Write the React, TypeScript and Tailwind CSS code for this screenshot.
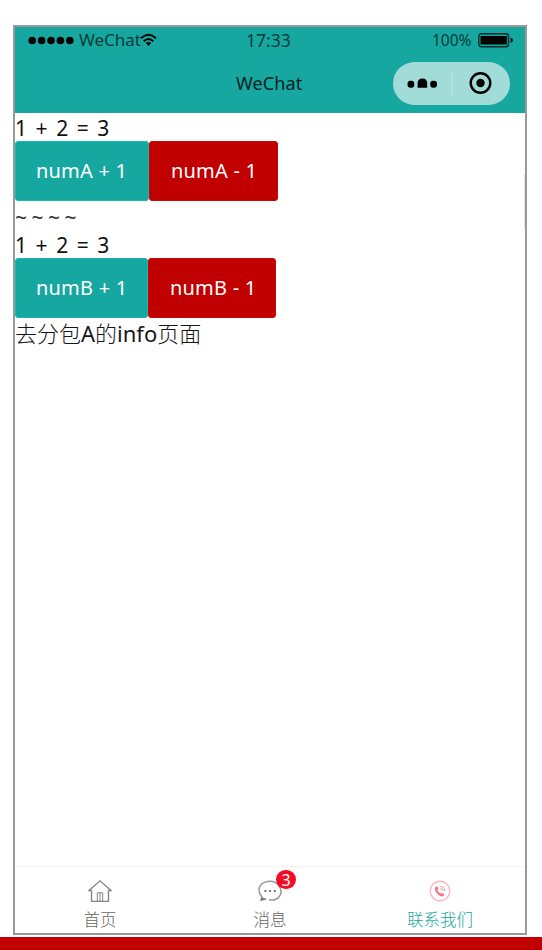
import React from 'react';

const FONT = "font-['Noto_Sans','Noto_Sans_CJK_SC',sans-serif]";

function StatusBar() {
  return (
    <div className="flex h-[26px] items-center text-black">
      <svg className="ml-[13px] block h-[9px] w-[48px] shrink-0" viewBox="0 0 48 9">
        {[4.2, 13.6, 23, 32.4, 41.8].map((x) => (
          <circle key={x} cx={x} cy="4.5" r="3.8" fill="#000" />
        ))}
      </svg>
      <span className="ml-[3px] w-[62px] text-[17px] leading-[26px] text-[#063b38]">WeChat</span>
      <svg className="-ml-px block h-[14px] w-[17px] shrink-0" viewBox="0 0 17 14" fill="none" stroke="#000" strokeWidth="2">
        <path d="M1 5.2Q8.5-1.6 16 5.2" />
        <path d="M3.7 8.2Q8.5 3.8 13.3 8.2" />
        <path d="M5.8 10Q8.5 8 11.2 10L8.5 13Z" fill="#000" stroke="none" />
      </svg>
      <span className="ml-[89px] w-[46px] text-[17.5px] leading-[26px] text-[#063b38]">17:33</span>
      <span className="ml-[140px] w-[41px] text-[15.5px] leading-[26px] text-[#063b38]">100%</span>
      <svg className="ml-[5px] block h-[16px] w-[36px] shrink-0" viewBox="0 0 36 16">
        <rect x="0.8" y="1.8" width="29.7" height="13" rx="2.5" fill="none" stroke="#032b29" strokeWidth="1.4" />
        <rect x="2.5" y="4" width="26.3" height="8.5" fill="#000" />
        <path d="M32.5 5.5Q35 6 35 8.3T32.5 11Z" fill="#022" />
      </svg>
    </div>
  );
}

function TitleBar() {
  return (
    <div className="grid h-[60px] grid-cols-[1fr_auto_1fr] items-start">
      <span />
      <span className="w-[68px] pt-[16px] text-[18px] leading-[28px] tracking-[0.1px] text-[#03211f]">WeChat</span>
      <div className="mr-[15px] mt-[9px] flex h-[43px] w-[117px] items-center justify-self-end rounded-full bg-[#a2dcd8]">
        <svg className="block h-[43px] w-[117px]" viewBox="0 0 117 43">
          <rect x="14.5" y="18.8" width="6.8" height="7" rx="3" />
          <path d="M24.6 25.8V21.2Q24.6 16.5 29.4 16.5T34.2 21.2V25.8Z" strokeLinejoin="round" />
          <rect x="37.2" y="18.8" width="6.8" height="7" rx="3" />
          <path d="M59 10V33" stroke="#b6e4e1" strokeWidth="1.5" />
          <circle cx="87.5" cy="21" r="9.8" fill="none" stroke="#000" strokeWidth="2.4" />
          <circle cx="87.5" cy="21" r="4.2" />
        </svg>
      </div>
    </div>
  );
}

function Counter({ name, plusWidth, minusWidth }: { name: string; plusWidth: string; minusWidth: string }) {
  return (
    <section>
      <div className="h-[28px] whitespace-pre text-[21px] leading-[30px] tracking-[1.55px] text-[#111]">1 + 2 = 3</div>
      <div className="flex h-[60px] whitespace-nowrap text-[20px] tracking-[0.2px] text-white">
        <button className={`${plusWidth} rounded-[3px] border border-[#10bbb0] bg-[#16a8a0] pl-[20px] text-left`}>{name} + 1</button>
        <button className={`${minusWidth} rounded-[3px] border border-[#cc0505] bg-[#c00000] pl-[21px] text-left`}>{name} - 1</button>
      </div>
    </section>
  );
}

function HomeIcon() {
  return (
    <svg className="block h-[24px] w-[24px]" viewBox="0 0 24 24" fill="none" stroke="#858585" strokeWidth="1.3">
      <path d="M3.5 11.5H1L12 1.8L23 11.5H20.5V22.3H3.5Z" />
      <path d="M9.3 22V13.8H14.7V22M12 14V22" strokeWidth="1" />
    </svg>
  );
}

function MessageIcon() {
  return (
    <svg className="block h-[24px] w-[26px]" viewBox="0 0 26 24" fill="none" stroke="#999" strokeWidth="1.5">
      <path d="M12 20.8C22 22.5 27 13.5 22 7C17-.5 3.5 1.2 2 10Q1.6 14.5 5 18L4 21.2L9 20" />
      <path d="M4 18L4 21.5L9.5 20Z" fill="#777" stroke="none" />
      <path d="M7.5 12H9.3M12.2 12H14M16.9 12H18.7" stroke="#666" strokeWidth="1.8" />
    </svg>
  );
}

function CallIcon() {
  return (
    <svg className="block h-[24px] w-[24px]" viewBox="0 0 24 24" fill="none">
      <circle cx="12" cy="12" r="9.8" stroke="#ffb5bd" strokeWidth="1.4" />
      <path d="M8.2 7.6Q6.5 8.5 7 11Q8.5 16 13.5 17.4Q15.5 17.5 16.5 15.8L14 13.8L12.5 14.6Q10.3 13 9.5 11L10.8 9.8L9.4 7.4Z" fill="#f9798b" />
      <path d="M12.3 9.7Q14.5 9.8 14.7 12M12.2 7.5Q16.6 7.6 16.8 12" stroke="#ffa8b4" strokeWidth="1.2" />
    </svg>
  );
}

export default function App() {
  return (
    <main className={`${FONT} flex h-[950px] w-[542px] flex-col overflow-hidden bg-white pt-[25px]`}>
      <div className="ml-[13px] flex h-[910px] w-[514px] shrink-0 flex-col border-2 border-[#999]">
        <header className="h-[86px] shrink-0 bg-[#16a8a0]">
          <StatusBar />
          <TitleBar />
        </header>
        <div className="flex min-h-0 flex-1">
          <div className="flex-1">
            <Counter name="numA" plusWidth="w-[134px]" minusWidth="w-[129px]" />
            <div className="h-[29px] text-[21px] leading-[32px] tracking-[4.5px] text-[#333]">~~~~</div>
            <Counter name="numB" plusWidth="w-[133px]" minusWidth="w-[128px]" />
            <div className="whitespace-nowrap text-[22px] font-light leading-[30px] text-[#161616]">
              去分包<span className="font-normal">A</span>的<span className="font-normal">info</span>页面
            </div>
          </div>
          <div className="mt-[61px] h-[54px] w-px shrink-0 bg-[#d5eedc]" />
        </div>
        <nav className="grid h-[67px] shrink-0 grid-cols-3 border-t border-[#f3f3f3] text-[16.5px] font-light leading-[24px] text-[#666]">
          <div className="flex flex-col items-center pt-[12px]">
            <HomeIcon />
            <span className="mt-[5px]">首页</span>
          </div>
          <div className="flex flex-col items-center pt-[12px]">
            <div className="relative">
              <MessageIcon />
              <span className="absolute left-[19px] top-[-9px] flex h-[19px] w-[20px] items-center justify-center rounded-full bg-[#f40c26] text-[16px] font-normal leading-none text-white">3</span>
            </div>
            <span className="mt-[5px]">消息</span>
          </div>
          <div className="flex flex-col items-center pt-[12px]">
            <CallIcon />
            <span className="mt-[5px] text-[#16a8a0]">联系我们</span>
          </div>
        </nav>
      </div>
      <div className="mt-[2px] h-[13px] shrink-0 bg-[#c00000]" />
    </main>
  );
}
